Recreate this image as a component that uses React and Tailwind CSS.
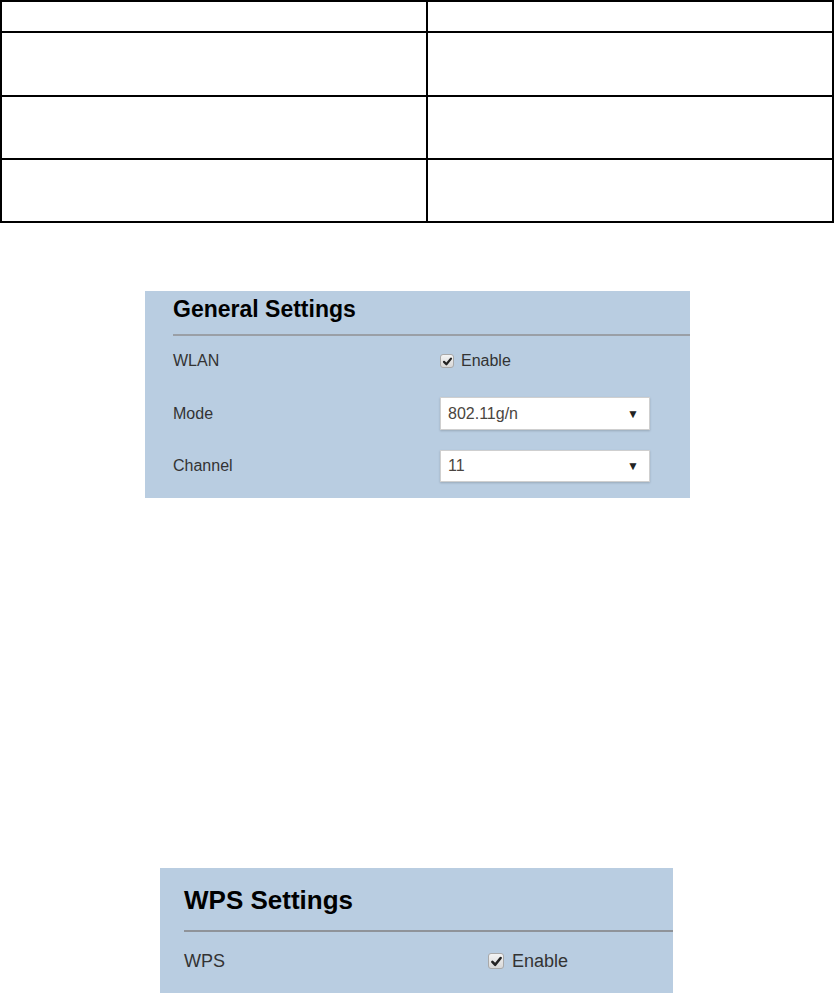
const font = { fontFamily: '"Liberation Sans", Arial, sans-serif' };

function Checkbox({ size = 14 }) {
  return (
    <span
      className="inline-flex items-center justify-center rounded-[3px] border border-[#a9a9a9] bg-gradient-to-b from-[#f4f4f4] to-[#d8d8d8] shrink-0"
      style={{ width: size, height: size }}
    >
      <svg viewBox="0 0 12 12" width={size - 3} height={size - 3}>
        <path d="M2.2 6.4 L4.8 9 L9.8 2.8" fill="none" stroke="#222" strokeWidth="2.4" strokeLinecap="round" strokeLinejoin="round" />
      </svg>
    </span>
  );
}

function Select({ value }) {
  return (
    <div className="flex items-center justify-between w-[210px] h-full bg-white border border-[#cfcfcf] shadow-[0_1px_2px_rgba(0,0,0,0.18)] pl-[7px] pr-[10px]">
      <span className="text-[16px] text-[#4a4540]">{value}</span>
      <span className="text-[12px] text-[#222]">▼</span>
    </div>
  );
}

export default function App() {
  return (
    <div className="min-h-screen bg-white" style={font}>
      <table className="w-full border-collapse">
        <tbody>
          {[31, 64, 63, 63].map((h, i) => (
            <tr key={i}>
              <td className="w-[426px] border-2 border-black" style={{ height: h }} />
              <td className="border-2 border-black" style={{ height: h }} />
            </tr>
          ))}
        </tbody>
      </table>

      <div className="ml-[145px] mt-[68px] w-[545px] h-[207px] bg-[#b9cde1] pl-[28px] pt-[4px]">
        <h2 className="text-[23px] leading-[28px] font-bold text-black">General Settings</h2>
        <div className="mt-[11px] h-[2px] bg-[#9a9fa6]" />
        <div className="mt-[13px] h-[24px] flex items-center">
          <span className="w-[267px] text-[16px] text-[#333]">WLAN</span>
          <Checkbox />
          <span className="ml-[7px] text-[16px] text-[#333]">Enable</span>
        </div>
        <div className="mt-[24px] h-[33px] flex items-center">
          <span className="w-[267px] text-[16px] text-[#333]">Mode</span>
          <Select value="802.11g/n" />
        </div>
        <div className="mt-[20px] h-[32px] flex items-center">
          <span className="w-[267px] text-[16px] text-[#333]">Channel</span>
          <Select value="11" />
        </div>
      </div>

      <div className="ml-[160px] mt-[370px] w-[513px] h-[125px] bg-[#b9cde1] pl-[24px] pt-[16px]">
        <h2 className="text-[26px] leading-[32px] font-bold text-black">WPS Settings</h2>
        <div className="mt-[14px] h-[2px] bg-[#8f9399]" />
        <div className="mt-[17px] h-[24px] flex items-center">
          <span className="w-[304px] text-[18px] text-[#333]">WPS</span>
          <Checkbox size={16} />
          <span className="ml-[8px] text-[18px] text-[#333]">Enable</span>
        </div>
      </div>
    </div>
  );
}
